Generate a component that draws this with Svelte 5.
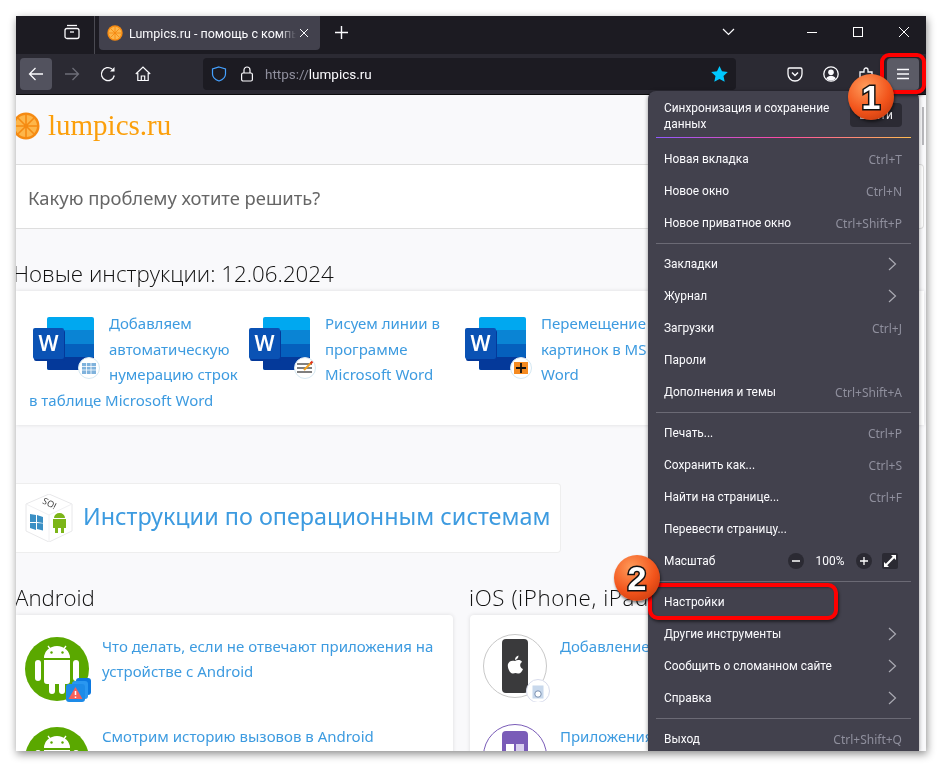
<script>
  const menuGroups = [
    [
      { label: "Новая вкладка", key: "Ctrl+T" },
      { label: "Новое окно", key: "Ctrl+N" },
      { label: "Новое приватное окно", key: "Ctrl+Shift+P" },
    ],
    [
      { label: "Закладки", arrow: true },
      { label: "Журнал", arrow: true },
      { label: "Загрузки", key: "Ctrl+J" },
      { label: "Пароли" },
      { label: "Дополнения и темы", key: "Ctrl+Shift+A" },
    ],
    [
      { label: "Печать...", key: "Ctrl+P" },
      { label: "Сохранить как...", key: "Ctrl+S" },
      { label: "Найти на странице...", key: "Ctrl+F" },
      { label: "Перевести страницу..." },
      { label: "Масштаб", zoom: true },
    ],
    [
      { label: "Настройки" },
      { label: "Другие инструменты", arrow: true },
      { label: "Сообщить о сломанном сайте", arrow: true },
      { label: "Справка", arrow: true },
    ],
    [{ label: "Выход", key: "Ctrl+Shift+Q" }],
  ];

  const news = [
    { title: "Добавляем автоматическую нумерацию строк в таблице Microsoft Word", badge: "table" },
    { title: "Рисуем линии в программе Microsoft Word", badge: "lines" },
    { title: "Перемещение картинок в MS Word", badge: "move" },
  ];
</script>

{#snippet orange(size)}
  <svg width={size} height={size} viewBox="0 0 28 28">
    <circle cx="14" cy="14" r="13.5" fill="#f58a12" />
    <circle cx="14" cy="14" r="11" fill="#fdb64a" />
    <g stroke="#f58a12" stroke-width="1.6">
      <path d="M14 3v22M3 14h22M6.2 6.2l15.6 15.6M21.8 6.2L6.2 21.8" />
    </g>
    <circle cx="14" cy="14" r="1.6" fill="#f58a12" />
  </svg>
{/snippet}

{#snippet wordIcon(badge)}
  <svg class="word" width="68" height="62" viewBox="0 0 68 62">
    <rect x="14" y="0" width="47" height="53" rx="2" fill="#00a8f0" />
    <rect x="14" y="13" width="47" height="14" fill="#0a84d4" />
    <rect x="14" y="27" width="47" height="13" fill="#0560bd" />
    <path d="M14 40h47v11a2 2 0 0 1-2 2H16a2 2 0 0 1-2-2z" fill="#04399a" />
    <rect x="1" y="13" width="31" height="31" rx="2" fill="#04399a" />
    <rect x="0" y="11" width="31" height="31" rx="2" fill="#0a52b4" />
    <text x="15.500" y="33.500" class="w">W</text>
    <circle cx="56" cy="51" r="10.500" fill="#fff" stroke="#d5e8f2" />
    {#if badge === "table"}
      <rect x="49" y="46" width="14" height="11" fill="#7fb2dc" />
      <path d="M49 49.500h14M49 53h14M53.500 46v11M58 46v11" stroke="#fff" stroke-width=".8" />
    {:else if badge === "lines"}
      <path d="M48 47h15M48 51h15M48 55h15" stroke="#555" stroke-width="1.300" />
      <path d="M55 53l8-8" stroke="#f0a020" stroke-width="2" />
      <path d="M61.500 46.500l2-2" stroke="#e03020" stroke-width="2" />
    {:else}
      <rect x="49" y="45" width="14" height="12" fill="#f58a20" />
      <path d="M56 46v10M51 51h10" stroke="#111" stroke-width="1.800" />
    {/if}
  </svg>
{/snippet}

{#snippet androidIcon(alert)}
  <svg class="round" width="68" height="68" viewBox="0 0 68 68">
    <circle cx="32" cy="32" r="32" fill="#5aa800" />
    <path d="M19 21a13 12 0 0 1 26 0z" fill="#fff" />
    <path d="M23 9l3 4M41 9l-3 4" stroke="#fff" stroke-width="1.300" />
    <circle cx="26.500" cy="15.500" r="1.200" fill="#5aa800" />
    <circle cx="37.500" cy="15.500" r="1.200" fill="#5aa800" />
    <path d="M19 23h26v21a3 3 0 0 1-3 3h-2v7a3 3 0 0 1-6 0v-7h-4v7a3 3 0 0 1-6 0v-7h-2a3 3 0 0 1-3-3z" fill="#fff" />
    <rect x="10" y="23" width="6" height="21" rx="3" fill="#fff" />
    <rect x="48" y="23" width="6" height="21" rx="3" fill="#fff" />
    {#if alert}
      <rect x="51" y="41" width="15" height="17" rx="3" fill="#0b78e0" />
      <rect x="47" y="44" width="16" height="18" rx="3" fill="#2a97f0" />
      <rect x="41" y="47" width="19" height="18" rx="3" fill="#1d8be8" />
      <path d="M50.500 50l7 12h-14z" fill="#f4605a" />
      <path d="M50.500 54v4M50.500 59.500v1.500" stroke="#fff" stroke-width="1.500" />
    {/if}
  </svg>
{/snippet}

<div class="window">
  <div class="tabbar">
    <svg class="view-btn" width="16" height="16" viewBox="0 0 16 16" fill="none" stroke="#fbfbfe" stroke-width="1.300">
      <path d="M3 1.500h10" />
      <rect x="1" y="4.500" width="14" height="10" rx="2" />
      <path d="M6 8h4" />
    </svg>
    <div class="tab-sep"></div>
    <div class="tab">
      {@render orange(16)}
      <span class="tab-title">Lumpics.ru - помощь с компьютером</span>
      <svg class="tab-close" width="10" height="10" viewBox="0 0 10 10" stroke="#fbfbfe" stroke-width="1"><path d="M1 1l8 8M9 1l-8 8" /></svg>
    </div>
    <svg class="newtab" width="13" height="13" viewBox="0 0 13 13" stroke="#fbfbfe" stroke-width="1.400"><path d="M6.500 0v13M0 6.500h13" /></svg>
    <svg class="tablist" width="13" height="8" viewBox="0 0 13 8" fill="none" stroke="#fbfbfe" stroke-width="1.200"><path d="M1 1l5.500 5.500L12 1" /></svg>
    <div class="winctl">
      <svg width="10" height="10" viewBox="0 0 10 10" stroke="#fff" stroke-width="1"><path d="M0 5.500h10" /></svg>
      <svg width="10" height="10" viewBox="0 0 10 10" fill="none" stroke="#fff" stroke-width="1"><rect x=".5" y=".5" width="9" height="9" /></svg>
      <svg width="10" height="10" viewBox="0 0 10 10" stroke="#fff" stroke-width="1"><path d="M0 0l10 10M10 0L0 10" /></svg>
    </div>
  </div>

  <div class="toolbar">
    <div class="tool active">
      <svg width="16" height="16" viewBox="0 0 16 16" fill="none" stroke="#fbfbfe" stroke-width="1.300"><path d="M15 8H1.500M7.500 2l-6 6 6 6" /></svg>
    </div>
    <div class="tool">
      <svg width="16" height="16" viewBox="0 0 16 16" fill="none" stroke="#6e6e78" stroke-width="1.300"><path d="M1 8h13.500M8.500 2l6 6-6 6" /></svg>
    </div>
    <div class="tool narrow">
      <svg width="16" height="16" viewBox="0 0 16 16" fill="none" stroke="#fbfbfe" stroke-width="1.300"><path d="M14.300 9.500A6.500 6.500 0 1 1 12 3" /><path d="M14.500 1v4.500H10z" fill="#fbfbfe" stroke="none" /></svg>
    </div>
    <div class="tool narrow">
      <svg width="16" height="16" viewBox="0 0 16 16" fill="none" stroke="#fbfbfe" stroke-width="1.200"><path d="M.8 8L8 1l7.200 7M2.800 7v7.500h10.400V7M6.300 14.500v-4.500h3.400v4.500" /></svg>
    </div>
    <div class="urlbar">
      <svg width="16" height="16" viewBox="0 0 16 16" fill="none" stroke="#45a1ff" stroke-width="1.200"><path d="M8 1l6.500 2v5c0 3.500-3 5.800-6.500 7-3.500-1.200-6.500-3.500-6.500-7V3z" /></svg>
      <svg width="14" height="16" viewBox="0 0 14 16" fill="none" stroke="#fbfbfe" stroke-width="1.200"><rect x="1.600" y="7" width="10.800" height="8" rx="1.500" /><path d="M4 7V4a3 3 0 0 1 6 0v3" /></svg>
      <span class="url"><span class="dim">https://</span>lumpics.ru</span>
      <svg class="star" width="17" height="16" viewBox="0 0 17 16" fill="#00c8ff"><path d="M8.500 0l2.500 5.300 5.800.7-4.300 4 1.200 5.800-5.200-2.900-5.200 2.900 1.200-5.800L.2 6 6 5.300z" /></svg>
    </div>
    <div class="tool-right">
      <svg width="16" height="16" viewBox="0 0 16 16" fill="none" stroke="#fbfbfe" stroke-width="1.300"><path d="M2.500 2h11A1.500 1.500 0 0 1 15 3.500V8a7 7 0 0 1-14 0V3.500A1.500 1.500 0 0 1 2.500 2z" /><path d="M5 6.500l3 3 3-3" stroke-width="1.500" /></svg>
      <svg width="16" height="16" viewBox="0 0 16 16"><circle cx="8" cy="8" r="7.200" fill="none" stroke="#fbfbfe" stroke-width="1.300" /><circle cx="8" cy="6.300" r="2.800" fill="#fbfbfe" /><path d="M3.200 12.500c1-2 3-2.800 4.800-2.800s3.800.8 4.800 2.800A7 7 0 0 1 8 14.500a7 7 0 0 1-4.800-2z" fill="#fbfbfe" /></svg>
      <svg width="16" height="16" viewBox="0 0 16 16" fill="none" stroke="#fbfbfe" stroke-width="1.300"><path d="M1 6h4V4a2 2 0 0 1 4 0v2h4v3.500h1a2 2 0 0 1 0 4h-1V15H1z" /></svg>
      <div class="hamburger">
        <svg width="14" height="12" viewBox="0 0 14 12" stroke="#fbfbfe" stroke-width="1.300"><path d="M1 1.500h12M1 6h12M1 10.500h12" /></svg>
      </div>
    </div>
  </div>

  <div class="page">
    <div class="logo">
      {@render orange(28)}
      <span class="logo-text">lumpics.ru</span>
    </div>
    <div class="search">Какую проблему хотите решить?</div>
    <h2 class="news-head">Новые инструкции: 12.06.2024</h2>
    <div class="news">
      {#each news as item}
        <a class="news-item" href="#top">
          <span class="news-icon">{@render wordIcon(item.badge)}</span>
          {item.title}
        </a>
      {/each}
    </div>

    <div class="os-panel">
      <svg class="cube" width="48" height="48" viewBox="0 0 48 48">
        <path d="M24 0l23 10v27L24 48 1 37V10z" fill="#fff" stroke="#e8e8ea" />
        <path d="M1 10l23 11 23-11M24 21v27" fill="none" stroke="#f0f0f2" />
        <text x="24" y="14" class="ios-mark" transform="rotate(208 24 10)">iOS</text>
        <path d="M5 20l6 1v7H5zM12 21l6 2v6l-6-1zM5 29h6v7l-6-2zM12 29l6 .500v7l-6-1.500z" fill="#3a8fc4" />
        <path d="M28 25h13v9h-2v5h-3v-5h-3v5h-3v-5h-2zM29 24a5.500 5 0 0 1 11 0z" fill="#7cb518" />
      </svg>
      <span>Инструкции по операционным системам</span>
    </div>

    <div class="os-grid">
      <section>
        <h2>Android</h2>
        <div class="os-card">
          <a class="os-row" href="#top">
            <span class="os-icon">{@render androidIcon(true)}</span>
            <span>Что делать, если не отвечают приложения на устройстве с Android</span>
          </a>
          <a class="os-row" href="#top">
            <span class="os-icon">{@render androidIcon(false)}</span>
            <span>Смотрим историю вызовов в Android</span>
          </a>
        </div>
      </section>
      <section>
        <h2>iOS (iPhone, iPad)</h2>
        <div class="os-card">
          <a class="os-row ios" href="#top">
            <span class="os-icon">
              <svg class="round" width="68" height="68" viewBox="0 0 68 68">
                <circle cx="32" cy="32" r="31.500" fill="#fff" stroke="#c8c8c8" />
                <rect x="19" y="5" width="26" height="54" rx="4" fill="#3a3a3c" />
                <path d="M32 27c2-1.500 6-1.500 7 1-3 2-2 6 1 7-1 3-3 5-5 4.500-2-.7-3-.7-5 0-3 .5-6-6-5-9.500 1-3 4-4 7-3zM32 26c0-2 1-4 3.500-4.500 0 2.500-1.500 4-3.500 4.500z" fill="#fff" />
                <circle cx="55" cy="57" r="11.500" fill="#fff" stroke="#d8dcec" />
                <rect x="49.500" y="51.500" width="11" height="13" fill="#c8d8ec" />
                <circle cx="55" cy="60" r="3.200" fill="#fff" stroke="#7a90b0" />
              </svg>
            </span>
            <span>Добавление слов в словарь iPhone</span>
          </a>
          <a class="os-row ios" href="#top">
            <span class="os-icon">
              <svg class="round" width="68" height="68" viewBox="0 0 68 68">
                <circle cx="32" cy="32" r="31.500" fill="#fff" stroke="#7a5cb8" />
                <rect x="19" y="7" width="26" height="54" rx="4" fill="#7a5cb8" />
                <rect x="23" y="20" width="8" height="10" fill="#fff" />
                <rect x="33" y="20" width="8" height="10" fill="#d9d0ee" />
              </svg>
            </span>
            <span>Приложения для iPhone</span>
          </a>
        </div>
      </section>
    </div>
  </div>

  <div class="scrollbar"></div>

  <div class="menu">
    <div class="sync">
      <span>Синхронизация и сохранение данных</span>
      <div class="sync-btn">Войти</div>
    </div>
    {#each menuGroups as group, i}
      {#if i > 0}<div class="menu-sep"></div>{/if}
      {#each group as row}
        <div class="menu-row">
          <span>{row.label}</span>
          {#if row.key}<span class="shortcut">{row.key}</span>{/if}
          {#if row.arrow}
            <svg class="chevron" width="9" height="14" viewBox="0 0 9 14" fill="none" stroke="#a9a9b2" stroke-width="1.200"><path d="M1 1l6.500 6L1 13" /></svg>
          {/if}
          {#if row.zoom}
            <div class="zoom-ctl">
              <span class="zoom-btn"><svg width="8" height="8" viewBox="0 0 8 8" stroke="#fff" stroke-width="1.300"><path d="M0 4h8" /></svg></span>
              <span class="zoom-val">100%</span>
              <span class="zoom-btn"><svg width="8" height="8" viewBox="0 0 8 8" stroke="#fff" stroke-width="1.300"><path d="M0 4h8M4 0v8" /></svg></span>
              <span class="zoom-full"><svg width="12" height="12" viewBox="0 0 12 12" fill="#fff"><path d="M7 0h5v5L10.200 3.300 3.300 10.200 5 12H0V7l1.800 1.700 6.900-6.900z" /></svg></span>
            </div>
          {/if}
        </div>
      {/each}
    {/each}
  </div>

  <div class="mark mark-menu"></div>
  <div class="mark mark-settings"></div>
  <div class="bubble bubble-one">1</div>
  <div class="bubble bubble-two">2</div>
</div>

<style>
  :global(body) {
    background: #fff;
  }

  .window {
    position: relative;
    width: 910px;
    height: 735px;
    margin: 16px;
    overflow: hidden;
    background: #fff;
    font-family: "Noto Sans", sans-serif;
    display: flex;
    flex-direction: column;
  }

  :global(#app) {
    filter: drop-shadow(1px 3px 4px rgba(0, 0, 0, 0.45));
    width: 942px;
    height: 767px;
    overflow: hidden;
  }

  .tabbar {
    height: 38px;
    flex: none;
    background: #1c1b22;
    display: flex;
    align-items: flex-start;
    color: #fbfbfe;
  }

  .view-btn {
    margin: 8px 0 0 48px;
  }

  .tab-sep {
    width: 1px;
    height: 38px;
    margin-left: 14px;
    background: #4a4a52;
  }

  .tab {
    width: 221px;
    height: 34px;
    margin-left: 4px;
    padding: 0 11px 0 8px;
    box-sizing: border-box;
    background: #42414d;
    border-radius: 0 0 4px 4px;
    display: flex;
    align-items: center;
    gap: 6px;
  }

  .tab-title {
    flex: 1;
    margin-right: -3px;
    font-family: Roboto, sans-serif;
    font-size: 12.5px;
    white-space: nowrap;
    overflow: hidden;
    -webkit-mask-image: linear-gradient(to right, #000 90%, transparent);
    mask-image: linear-gradient(to right, #000 90%, transparent);
  }

  .tab-close {
    flex: none;
  }

  .newtab {
    margin: 10px 0 0 15px;
  }

  .tablist {
    margin: 12px 0 0 374px;
  }

  .winctl {
    margin: 11px 0 0 auto;
    display: flex;
    gap: 36px;
    padding-right: 17px;
  }

  .toolbar {
    height: 40px;
    flex: none;
    background: #2b2a33;
    border-bottom: 1px solid #0c0c0d;
    display: flex;
    align-items: center;
    padding-left: 4px;
  }

  .tool {
    width: 32px;
    height: 32px;
    margin-right: 4px;
    border-radius: 4px;
    display: flex;
    align-items: center;
    justify-content: center;
  }

  .tool.active {
    background: #52525e;
  }

  .tool.narrow {
    margin-right: 3px;
  }

  .urlbar {
    width: 533px;
    height: 32px;
    margin-left: 41px;
    padding: 0 8px;
    box-sizing: border-box;
    background: #1c1b22;
    border-radius: 4px;
    display: flex;
    align-items: center;
    gap: 13px;
  }

  .url {
    font-family: Roboto, sans-serif;
    font-size: 13.5px;
    margin-left: -2px;
    color: #fbfbfe;
  }

  .dim {
    color: #8f8f9d;
  }

  .star {
    margin-left: auto;
  }

  .tool-right {
    display: flex;
    align-items: center;
    gap: 20px;
    margin-left: 51px;
  }

  .hamburger {
    width: 32px;
    height: 32px;
    margin-left: -8px;
    background: #5b5b66;
    border-radius: 4px;
    display: flex;
    align-items: center;
    justify-content: center;
  }

  .page {
    flex: 1;
    min-height: 0;
    overflow: hidden;
    background: #f9f9fb;
    padding-right: 2px;
  }

  .logo {
    height: 69px;
    margin-left: -4px;
    display: flex;
    align-items: center;
    gap: 8px;
    padding-bottom: 8px;
    box-sizing: border-box;
  }

  .logo-text {
    font-family: "Liberation Serif", serif;
    font-size: 29px;
    color: #fb9f0b;
  }

  .search {
    height: 65px;
    padding: 1px 12px 0;
    box-sizing: border-box;
    display: flex;
    align-items: center;
    background: #fff;
    border: 1px solid #dedede;
    border-left: 0;
    border-radius: 0 4px 4px 0;
    font-size: 18.4px;
    color: #666;
  }

  h2 {
    margin: 0;
    font-weight: 300;
    font-size: 22.3px;
    line-height: 30px;
    color: #111;
    white-space: nowrap;
    font-family: "Open Sans", sans-serif;
  }

  .news-head {
    margin: 30px 0 2px -3px;
  }

  .news {
    height: 134px;
    padding: 20px 0 0 13px;
    box-sizing: border-box;
    display: flex;
    background: #fff;
    box-shadow: 0 0 4px rgba(0, 0, 0, 0.12);
    overflow: hidden;
  }

  a {
    color: #3d9be0;
    text-decoration: none;
  }

  .news-item {
    flex: none;
    width: 216px;
    padding-right: 6px;
    box-sizing: border-box;
    display: block;
    font-size: 15px;
    line-height: 25.5px;
  }

  .news-icon {
    float: left;
    width: 80px;
    height: 70px;
    padding: 6px 0 0 4px;
    box-sizing: border-box;
  }

  .word {
    display: block;
  }

  .w {
    font: 600 21px "Noto Sans", sans-serif;
    fill: #fff;
    text-anchor: middle;
  }

  .os-panel {
    width: 545px;
    height: 70px;
    margin-top: 58px;
    padding: 0 0 4px 9px;
    box-sizing: border-box;
    display: flex;
    align-items: center;
    gap: 10px;
    background: #fff;
    border: 1px solid #eee;
    border-left: 0;
    border-radius: 0 4px 4px 0;
    font-size: 23.4px;
    color: #3d9be0;
    white-space: nowrap;
  }

  .cube {
    margin-top: 4px;
  }

  .ios-mark {
    font: 9px "Noto Sans", sans-serif;
    fill: #444;
    text-anchor: middle;
  }

  .os-grid {
    display: grid;
    grid-template-columns: 437px 437px;
    gap: 17px;
    margin-top: 28px;
  }

  section h2 {
    line-height: 34px;
    margin-left: -1px;
  }

  section:last-child h2 {
    letter-spacing: 0.6px;
  }

  .os-card {
    height: 200px;
    padding-top: 19px;
    box-sizing: border-box;
    background: #fff;
    border-radius: 0 4px 0 0;
    box-shadow: 0 0 4px rgba(0, 0, 0, 0.12);
  }

  section:last-child .os-card {
    border-radius: 4px 4px 0 0;
  }

  .os-row {
    display: flex;
    height: 90px;
    padding: 0 14px 0 9px;
    box-sizing: border-box;
    font-size: 15px;
    line-height: 25px;
  }

  .os-row.ios {
    padding-left: 13px;
  }

  .os-icon {
    flex: none;
    width: 77px;
    padding-top: 3px;
  }

  .os-row.ios .os-icon {
    padding-top: 0;
  }

  .round {
    display: block;
  }

  .scrollbar {
    position: absolute;
    right: 2px;
    top: 91px;
    width: 2px;
    height: 38px;
    background: #b8b8bc;
  }

  .menu {
    position: absolute;
    top: 75px;
    left: 632px;
    width: 271px;
    height: 660px;
    padding: 0 8px;
    box-sizing: border-box;
    background: #42414d;
    border-radius: 8px 8px 0 0;
    box-shadow: 0 1px 4px rgba(0, 0, 0, 0.4);
    color: #fbfbfe;
    font-family: Roboto, sans-serif;
    font-size: 11.9px;
    overflow: hidden;
  }

  .sync {
    height: 47px;
    margin-bottom: 5px;
    padding: 9px 9px 0 8px;
    box-sizing: border-box;
    display: flex;
    justify-content: space-between;
    line-height: 16px;
    border-bottom: 1px solid;
    border-image: linear-gradient(to right, #9059ff, #ff4aa2, #ffbd4f) 1;
  }

  .sync > span {
    width: 180px;
  }

  .sync-btn {
    width: 52px;
    height: 24px;
    margin-top: 3px;
    border-radius: 4px;
    background: #2b2a33;
    text-align: center;
    line-height: 24px;
  }

  .menu-row {
    height: 32px;
    padding: 0 9px 0 8px;
    box-sizing: border-box;
    display: flex;
    align-items: center;
    justify-content: space-between;
  }

  .shortcut {
    color: #8f8f9d;
    font-family: "Noto Sans", sans-serif;
    font-size: 12px;
  }

  .chevron {
    margin-right: 5px;
  }

  .menu-sep {
    height: 1px;
    margin: 4px 0;
    background: #6b6a75;
  }

  .zoom-ctl {
    display: flex;
    align-items: center;
    margin-right: 4px;
  }

  .zoom-btn {
    width: 16px;
    height: 16px;
    border-radius: 50%;
    background: #2b2a33;
    display: flex;
    align-items: center;
    justify-content: center;
  }

  .zoom-val {
    width: 52px;
    text-align: center;
  }

  .zoom-full {
    width: 16px;
    height: 16px;
    margin-left: 10px;
    background: #2b2a33;
    border-radius: 2px;
    display: flex;
    align-items: center;
    justify-content: center;
  }

  .mark {
    position: absolute;
    box-sizing: border-box;
    border: 4px solid #f00;
    box-shadow: 1px 2px 3px rgba(0, 0, 0, 0.5), inset 1px 1px 2px rgba(0, 0, 0, 0.3);
  }

  .mark-menu {
    left: 864px;
    top: 37px;
    width: 46px;
    height: 41px;
    border-radius: 9px;
  }

  .mark-settings {
    left: 632px;
    top: 567px;
    width: 190px;
    height: 37px;
    border-radius: 10px;
  }

  .bubble {
    position: absolute;
    width: 46px;
    height: 46px;
    border-radius: 50%;
    background: radial-gradient(circle at 38% 28%, #ff9b5a, #f2541b 55%, #b8320a);
    box-shadow: 1px 2px 3px rgba(0, 0, 0, 0.55);
    display: flex;
    align-items: center;
    justify-content: center;
    font: bold 34px "Liberation Sans", sans-serif;
    color: #fff;
    -webkit-text-stroke: 3px #111;
    paint-order: stroke fill;
  }

  .bubble-one {
    left: 832px;
    top: 58px;
  }

  .bubble-two {
    left: 598px;
    top: 539px;
  }
</style>
